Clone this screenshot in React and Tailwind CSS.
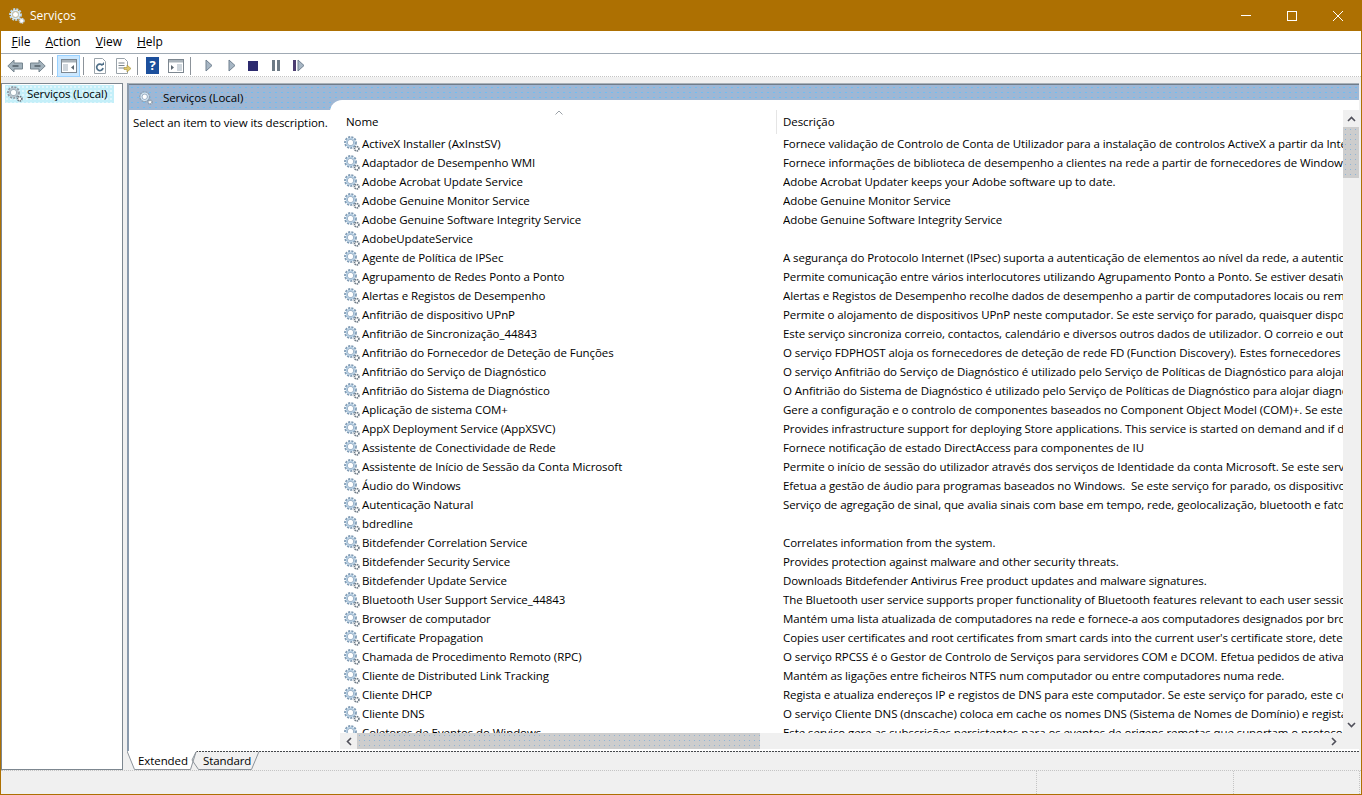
import React from 'react';

const font = { fontFamily: '"Open Sans", sans-serif' };

const rows = [
  ['ActiveX Installer (AxInstSV)', 'Fornece validação de Controlo de Conta de Utilizador para a instalação de controlos ActiveX a partir da Internet e permite'],
  ['Adaptador de Desempenho WMI', 'Fornece informações de biblioteca de desempenho a clientes na rede a partir de fornecedores de Windows Management'],
  ['Adobe Acrobat Update Service', 'Adobe Acrobat Updater keeps your Adobe software up to date.'],
  ['Adobe Genuine Monitor Service', 'Adobe Genuine Monitor Service'],
  ['Adobe Genuine Software Integrity Service', 'Adobe Genuine Software Integrity Service'],
  ['AdobeUpdateService', ''],
  ['Agente de Política de IPSec', 'A segurança do Protocolo Internet (IPsec) suporta a autenticação de elementos ao nível da rede, a autenticação da origem'],
  ['Agrupamento de Redes Ponto a Ponto', 'Permite comunicação entre vários interlocutores utilizando Agrupamento Ponto a Ponto. Se estiver desativado, algumas'],
  ['Alertas e Registos de Desempenho', 'Alertas e Registos de Desempenho recolhe dados de desempenho a partir de computadores locais ou remotos com base'],
  ['Anfitrião de dispositivo UPnP', 'Permite o alojamento de dispositivos UPnP neste computador. Se este serviço for parado, quaisquer dispositivos UPnP'],
  ['Anfitrião de Sincronização_44843', 'Este serviço sincroniza correio, contactos, calendário e diversos outros dados de utilizador. O correio e outras aplicações'],
  ['Anfitrião do Fornecedor de Deteção de Funções', 'O serviço FDPHOST aloja os fornecedores de deteção de rede FD (Function Discovery). Estes fornecedores FD fornecem'],
  ['Anfitrião do Serviço de Diagnóstico', 'O serviço Anfitrião do Serviço de Diagnóstico é utilizado pelo Serviço de Políticas de Diagnóstico para alojar diagnósticos'],
  ['Anfitrião do Sistema de Diagnóstico', 'O Anfitrião do Sistema de Diagnóstico é utilizado pelo Serviço de Políticas de Diagnóstico para alojar diagnósticos que'],
  ['Aplicação de sistema COM+', 'Gere a configuração e o controlo de componentes baseados no Component Object Model (COM)+. Se este serviço for parado'],
  ['AppX Deployment Service (AppXSVC)', 'Provides infrastructure support for deploying Store applications. This service is started on demand and if disabled Store'],
  ['Assistente de Conectividade de Rede', 'Fornece notificação de estado DirectAccess para componentes de IU'],
  ['Assistente de Início de Sessão da Conta Microsoft', 'Permite o início de sessão do utilizador através dos serviços de Identidade da conta Microsoft. Se este serviço for parado'],
  ['Áudio do Windows', 'Efetua a gestão de áudio para programas baseados no Windows.  Se este serviço for parado, os dispositivos de áudio e efeitos'],
  ['Autenticação Natural', 'Serviço de agregação de sinal, que avalia sinais com base em tempo, rede, geolocalização, bluetooth e fatores de'],
  ['bdredline', ''],
  ['Bitdefender Correlation Service', 'Correlates information from the system.'],
  ['Bitdefender Security Service', 'Provides protection against malware and other security threats.'],
  ['Bitdefender Update Service', 'Downloads Bitdefender Antivirus Free product updates and malware signatures.'],
  ['Bluetooth User Support Service_44843', 'The Bluetooth user service supports proper functionality of Bluetooth features relevant to each user session.'],
  ['Browser de computador', 'Mantém uma lista atualizada de computadores na rede e fornece-a aos computadores designados por browsers. Se este'],
  ['Certificate Propagation', "Copies user certificates and root certificates from smart cards into the current user's certificate store, detects when a"],
  ['Chamada de Procedimento Remoto (RPC)', 'O serviço RPCSS é o Gestor de Controlo de Serviços para servidores COM e DCOM. Efetua pedidos de ativação de objetos'],
  ['Cliente de Distributed Link Tracking', 'Mantém as ligações entre ficheiros NTFS num computador ou entre computadores numa rede.'],
  ['Cliente DHCP', 'Regista e atualiza endereços IP e registos de DNS para este computador. Se este serviço for parado, este computador não'],
  ['Cliente DNS', 'O serviço Cliente DNS (dnscache) coloca em cache os nomes DNS (Sistema de Nomes de Domínio) e regista o nome'],
  ['Coletores de Eventos do Windows', 'Este serviço gere as subscrições persistentes para os eventos de origens remotas que suportam o protocolo WS-Management'],
];

const bandDots = 'bg-[radial-gradient(circle,#6fbdf2_0.5px,transparent_0.7px)] bg-size-[6px_5px]';
const thumbDots = 'bg-[radial-gradient(circle,#8fb4d6_0.6px,transparent_0.8px)] bg-size-[5px_5px]';
const selDots = 'bg-[radial-gradient(circle,#ffffff_0.6px,transparent_0.8px)] bg-size-[4px_4px]';

// big gear with a small one at the lower right
function Gear({ className = 'w-4 h-4', main = '#7f9ab3', light = '#b4cee3', small = '#6f7c88' }) {
  return (
    <svg viewBox="0 0 16 16" className={className}>
      <circle cx="6.5" cy="6.5" r="5.4" fill="none" stroke={main} strokeWidth="2" strokeDasharray="2.1 1.1" />
      <circle cx="6.5" cy="6.5" r="4" fill="none" stroke={light} strokeWidth="1.6" />
      <circle cx="6.5" cy="6.5" r="3" fill="none" stroke={main} strokeWidth="0.9" />
      <circle cx="6.5" cy="6.5" r="2.5" fill="#fff" />
      <circle cx="12.7" cy="12.7" r="2.2" fill="#fff" stroke={small} strokeWidth="1.7" strokeDasharray="1.3 0.6" />
    </svg>
  );
}

function Sep() {
  return <div className="w-px h-[18px] bg-[#8c939a] ml-[3px] mr-[4px]" />;
}

function Arrow({ flip }) {
  return (
    <svg viewBox="0 0 16 14" className={`w-4 h-[14px] ${flip ? '-scale-x-100' : ''}`}>
      <path d="M.8 7 7 1v3h8.5v6H7v3Z" fill="#a3b2bc" stroke="#76858f" />
      <path d="M5.5 6.2h6v1.6h-6Z" fill="#56626b" />
    </svg>
  );
}

function PaneIcon({ kind }) {
  return (
    <svg viewBox="0 0 16 14" className="w-4 h-[14px]">
      <rect x="0.5" y="0.5" width="15" height="13" fill="#fff" stroke="#7d8790" />
      <rect x="1" y="1" width="14" height="2.5" fill="#aab3ba" />
      {kind === 'tree' ? (
        <>
          <rect x="2" y="5" width="5" height="7" fill="#cfd6dc" />
          <path d="M13 6v5l-3-2.5Z" fill="#5c6770" />
        </>
      ) : (
        <>
          <path d="M3 6v5l3-2.5Z" fill="#5c6770" />
          <rect x="9" y="5" width="5" height="7" fill="#cfd6dc" />
        </>
      )}
    </svg>
  );
}

function Play() {
  return (
    <svg viewBox="0 0 8 13" className="w-2 h-[13px]">
      <path d="M1 1 7 6.5 1 12Z" fill="#a7b6c4" stroke="#70808f" />
    </svg>
  );
}

function ToolButton({ children, active }) {
  return (
    <div className={`w-[23px] h-[22px] flex items-center justify-center ${active ? 'bg-[#cce8ff] border border-[#99d1ff]' : ''}`}>
      {children}
    </div>
  );
}

function Menu({ first, rest }) {
  return (
    <span className="px-[7.5px] leading-[22px]">
      <span className="underline">{first}</span>
      {rest}
    </span>
  );
}

export default function App() {
  return (
    <div className="w-[1362px] h-[795px] flex flex-col overflow-hidden bg-[#f0f0f0] border-x border-b border-[#ad7002] text-[11.5px] tracking-[-0.08px] text-black" style={font}>
      {/* title bar */}
      <div className="h-[31px] shrink-0 flex items-center bg-[#ad7002] -mx-px pl-[9px] pr-px text-white text-[12px] tracking-normal">
        <Gear main="#bcd8ee" light="#dcedf8" small="#c9d3da" />
        <span className="ml-[5px]">Serviços</span>
        <div className="ml-auto flex items-center">
          <div className="w-[46px] flex justify-center">
            <div className="w-[10px] h-px bg-white" />
          </div>
          <div className="w-[46px] flex justify-center">
            <div className="w-[10px] h-[10px] border border-white" />
          </div>
          <div className="w-[46px] flex justify-center">
            <svg viewBox="0 0 10 10" className="w-[10px] h-[10px]">
              <path d="M0 0 10 10M10 0 0 10" stroke="#fff" strokeWidth="1" />
            </svg>
          </div>
        </div>
      </div>

      {/* menu */}
      <div className="h-[23px] shrink-0 bg-white flex items-center px-[3px] border-b border-[#a0aab4] text-[12px] tracking-normal">
        <Menu first="F" rest="ile" />
        <Menu first="A" rest="ction" />
        <Menu first="V" rest="iew" />
        <Menu first="H" rest="elp" />
      </div>

      {/* toolbar */}
      <div className="h-[23px] shrink-0 bg-white flex items-center pl-[2px] pt-px border-b border-dotted border-[#c4c4c4]">
        <ToolButton><Arrow /></ToolButton>
        <ToolButton><Arrow flip /></ToolButton>
        <Sep />
        <ToolButton active><PaneIcon kind="tree" /></ToolButton>
        <Sep />
        <ToolButton>
          <svg viewBox="0 0 14 16" className="w-[14px] h-4">
            <path d="M1.5.5h8l3 3v12h-11Z" fill="#fff" stroke="#9aa3aa" />
            <path d="M9.5 7.5A3.2 3.2 0 1 0 10 10" fill="none" stroke="#4f6f88" strokeWidth="1.7" />
            <path d="M8 7h3V4Z" fill="#4f6f88" />
          </svg>
        </ToolButton>
        <ToolButton>
          <svg viewBox="0 0 16 16" className="w-4 h-4">
            <path d="M1.5.5h8l3 3v12h-11Z" fill="#fff" stroke="#9aa3aa" />
            <path d="M3.5 5h6M3.5 7.5h6M3.5 10h6" stroke="#7b858d" />
            <path d="M9 9.5h3V7l4 3.5-4 3.5v-2.5H9Z" fill="#e0c86a" stroke="#a38f3c" strokeWidth="0.6" />
          </svg>
        </ToolButton>
        <Sep />
        <div className="-ml-px">
          <ToolButton>
            <div className="w-[13px] h-[17px] bg-[#1c4f9c] text-white font-bold text-[13px] leading-[17px] text-center">?</div>
          </ToolButton>
        </div>
        <ToolButton><PaneIcon kind="action" /></ToolButton>
        <Sep />
        <div className="flex items-center ml-[10px]">
          <Play />
          <div className="ml-[15px]"><Play /></div>
          <div className="ml-[12px] w-[10px] h-[10px] bg-[#2c2a6e]" />
          <div className="ml-[14px] flex gap-[2px]">
            <div className="w-[3px] h-[11px] bg-[#6d7a85]" />
            <div className="w-[3px] h-[11px] bg-[#6d7a85]" />
          </div>
          <div className="ml-[13px] flex items-center gap-px">
            <div className="w-[3px] h-[11px] bg-[#4c3d70]" />
            <Play />
          </div>
        </div>
      </div>

      {/* main */}
      <div className="flex-1 min-h-0 flex pt-[6px] pr-[2px]">
        {/* tree */}
        <div className="w-[122px] shrink-0 bg-white border border-[#7d8790] pl-[3px] pt-px">
          <div className={`w-[109px] h-[18px] flex items-center bg-[#c4eff9] ${selDots} pl-[2px] whitespace-nowrap`}>
            <Gear main="#8f99a3" light="#b9c2ca" small="#6e7780" />
            <span className="ml-[4px]">Serviços (Local)</span>
          </div>
        </div>

        {/* right */}
        <div className="flex-1 min-w-0 ml-[4px] flex flex-col">
          <div className="flex-1 min-h-0 flex flex-col border-l-2 border-[#8a9aac] border-t border-t-[#a9b1b8] bg-white">
            <div className={`h-[26px] shrink-0 bg-[#9fb7d4] ${bandDots} border-t border-[#6f7c8a] flex items-center pl-[10px]`}>
              <Gear className="w-[14px] h-[14px]" main="#8fa2b5" light="#d5e5f0" small="#8a98a6" />
              <span className="ml-[10px]">Serviços (Local)</span>
            </div>
            <div className="flex-1 min-h-0 flex">
              <div className="w-[201px] shrink-0 pl-[4px] pt-[5px] leading-4 whitespace-nowrap">Select an item to view its description.</div>
              <div className="relative flex-1 min-w-0 bg-white rounded-tl-[12px] -mt-[10px] overflow-hidden">
                <div className="h-[34px] flex relative">
                  <div className="w-[446px] pl-[16px] pt-[14px] leading-4">Nome</div>
                  <div className="w-px h-[24px] mt-[10px] bg-[#e5e5e5]" />
                  <div className="pl-[6px] pt-[14px] leading-4">Descrição</div>
                  <svg viewBox="0 0 8 5" className="absolute left-[225px] top-[10px] w-2 h-[5px]">
                    <path d="M.5 4.5 4 1l3.5 3.5" fill="none" stroke="#9aa0a6" />
                  </svg>
                </div>
                <div className="h-[600px] overflow-hidden">
                  {rows.map(([name, desc]) => (
                    <div key={name} className="h-[19px] flex items-center whitespace-pre">
                      <div className="w-[446px] shrink-0 flex items-center pl-[14px]">
                        <Gear />
                        <span className="ml-[2px]">{name}</span>
                      </div>
                      <div className="ml-[7px] min-w-0 flex-1 overflow-hidden">{desc}</div>
                    </div>
                  ))}
                </div>

                {/* vertical scrollbar */}
                <div className="absolute right-0 top-[10px] w-[16px] h-[623px] bg-[#f0f0f0] flex flex-col items-center">
                  <div className="h-[17px] flex items-center">
                    <svg viewBox="0 0 9 6" className="w-[9px] h-[6px]">
                      <path d="M1 5 4.5 1.5 8 5" fill="none" stroke="#50505a" strokeWidth="1.6" />
                    </svg>
                  </div>
                  <div className={`w-full h-[51px] bg-[#cdcdcd] ${thumbDots}`} />
                  <div className="mt-auto h-[17px] flex items-center">
                    <svg viewBox="0 0 9 6" className="w-[9px] h-[6px]">
                      <path d="M1 1 4.5 4.5 8 1" fill="none" stroke="#50505a" strokeWidth="1.6" />
                    </svg>
                  </div>
                </div>

                {/* horizontal scrollbar */}
                <div className="absolute left-[10px] right-0 top-[633px] h-[16px] bg-[#f0f0f0] flex items-center">
                  <div className="w-[17px] flex justify-center">
                    <svg viewBox="0 0 6 9" className="w-[6px] h-[9px]">
                      <path d="M5 1 1.5 4.5 5 8" fill="none" stroke="#50505a" strokeWidth="1.6" />
                    </svg>
                  </div>
                  <div className={`w-[403px] h-full bg-[#cdcdcd] ${thumbDots}`} />
                  <div className="ml-auto w-[17px] mr-[17px] flex justify-center">
                    <svg viewBox="0 0 6 9" className="w-[6px] h-[9px]">
                      <path d="M1 1 4.5 4.5 1 8" fill="none" stroke="#50505a" strokeWidth="1.6" />
                    </svg>
                  </div>
                </div>
              </div>
            </div>
          </div>

          {/* tabs */}
          <div className="relative h-[19px] shrink-0 flex items-center">
            <svg viewBox="0 0 1232 19" className="absolute inset-0 w-full h-full">
              <path d="M0 .5H1232" stroke="#45484c" strokeDasharray="2 1" />
              <path d="M0 0 7.5 18.5H63.5L69 1 70 0Z" fill="#fff" />
              <path d="M0 0 7.5 18.5H63.5L69 1" fill="none" stroke="#8c939a" />
              <path d="M69 1 65 9 71.5 18.5H124.5L132 .5" fill="none" stroke="#8c939a" />
            </svg>
            <span className="relative ml-[11px]">Extended</span>
            <span className="relative ml-[15px]">Standard</span>
          </div>
        </div>
      </div>

      {/* status bar */}
      <div className="h-[24px] shrink-0 border-t border-dotted border-[#c4c4c4] flex justify-end">
        <div className="w-[197px] border-l border-dotted border-[#c4c4c4]" />
        <div className="w-[127px] border-x border-dotted border-[#c4c4c4] mr-px" />
      </div>
    </div>
  );
}
